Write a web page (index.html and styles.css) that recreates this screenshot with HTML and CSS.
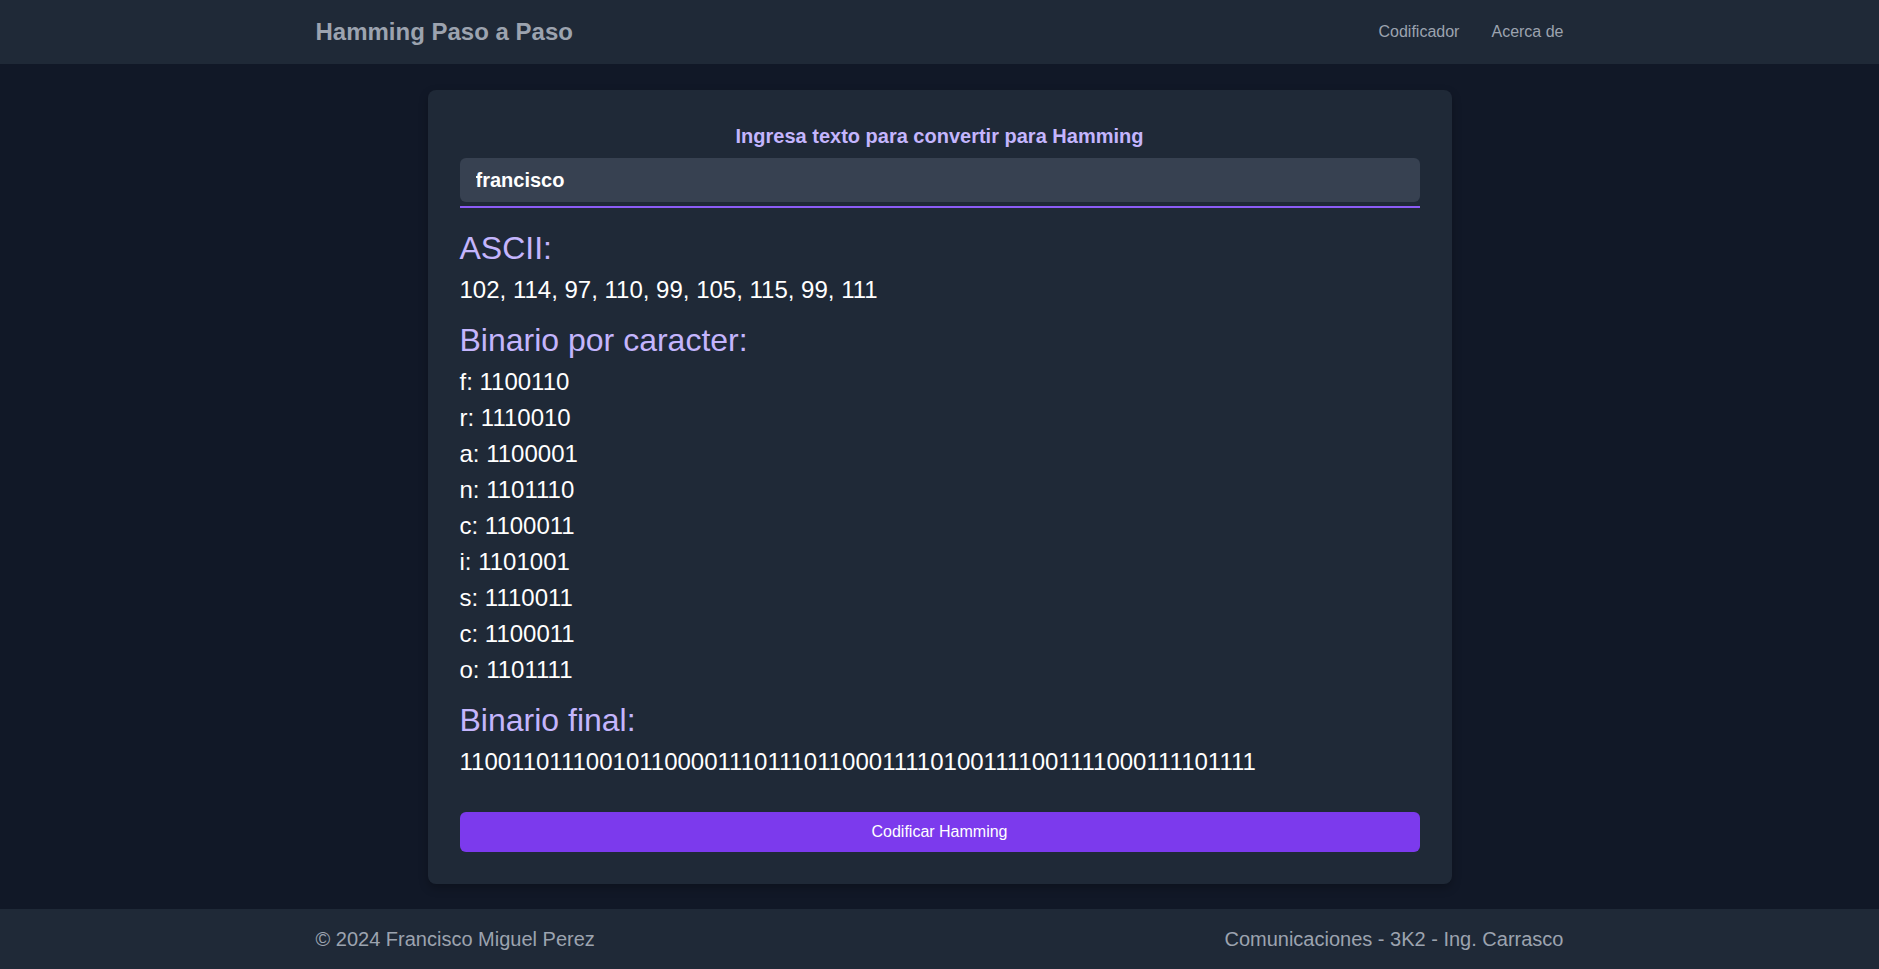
FILE: index.html
```html
<!DOCTYPE html>
<html lang="es">
<head>
<meta charset="utf-8">
<title>Hamming Paso a Paso</title>
<link rel="stylesheet" href="styles.css">
</head>
<body>
<div class="page">
  <header class="topbar">
    <div class="container topbar-inner">
      <a class="brand" href="#">Hamming Paso a Paso</a>
      <nav class="nav">
        <a href="#">Codificador</a>
        <a href="#">Acerca de</a>
      </nav>
    </div>
  </header>

  <main class="main">
    <section class="card">
      <label class="label" for="texto">Ingresa texto para convertir para Hamming</label>
      <div class="input-wrap">
        <input id="texto" class="text-input" type="text" value="francisco">
      </div>

      <div class="block first">
        <h2 class="heading">ASCII:</h2>
        <p class="value">102, 114, 97, 110, 99, 105, 115, 99, 111</p>
      </div>

      <div class="block">
        <h2 class="heading">Binario por caracter:</h2>
        <ul class="chars">
          <li>f: 1100110</li>
          <li>r: 1110010</li>
          <li>a: 1100001</li>
          <li>n: 1101110</li>
          <li>c: 1100011</li>
          <li>i: 1101001</li>
          <li>s: 1110011</li>
          <li>c: 1100011</li>
          <li>o: 1101111</li>
        </ul>
      </div>

      <div class="block">
        <h2 class="heading">Binario final:</h2>
        <p class="value">110011011100101100001110111011000111101001111001111000111101111</p>
      </div>

      <button class="btn" type="button">Codificar Hamming</button>
    </section>
  </main>

  <footer class="footer">
    <div class="container footer-inner">
      <span>© 2024 Francisco Miguel Perez</span>
      <span>Comunicaciones - 3K2 - Ing. Carrasco</span>
    </div>
  </footer>
</div>
</body>
</html>
```

FILE: styles.css
```css
* {
  box-sizing: border-box;
}

html, body {
  margin: 0;
  padding: 0;
}

body {
  background: #111827;
  color: #ffffff;
  font-family: "Liberation Sans", Arial, Helvetica, sans-serif;
  line-height: 1.5;
}

.page {
  min-height: 100vh;
  display: flex;
  flex-direction: column;
}

.container {
  max-width: 1280px;
  margin: 0 auto;
  padding: 0 16px;
  width: 100%;
}

.topbar {
  background: #1f2937;
}

.topbar-inner {
  display: flex;
  align-items: center;
  justify-content: space-between;
  height: 64px;
}

.brand {
  color: #9ca3af;
  font-size: 24px;
  font-weight: 700;
  line-height: 32px;
  text-decoration: none;
}

.nav {
  display: flex;
  gap: 32px;
}

.nav a {
  color: #9ca3af;
  font-size: 16px;
  line-height: 24px;
  text-decoration: none;
}

.main {
  flex: 1;
  display: flex;
  align-items: center;
  justify-content: center;
  padding: 24px 0;
}

.card {
  width: 1024px;
  background: #1f2937;
  border-radius: 8px;
  padding: 32px;
  box-shadow: 0 4px 10px rgba(0, 0, 0, 0.25);
}

.label {
  display: block;
  text-align: center;
  color: #c4b5fd;
  font-size: 20px;
  font-weight: 700;
  line-height: 28px;
  margin-bottom: 8px;
}

.input-wrap {
  padding-bottom: 4px;
  border-bottom: 2px solid #8b5cf6;
}

.text-input {
  display: block;
  width: 100%;
  height: 44px;
  background: #374151;
  border: none;
  border-radius: 6px;
  padding: 9px 16px 7px;
  color: #ffffff;
  font-family: "Liberation Sans", Arial, Helvetica, sans-serif;
  font-size: 20px;
  font-weight: 700;
  line-height: 28px;
  outline: none;
}

.block {
  margin-top: 8px;
}

.block.first {
  margin-top: 16px;
}

.heading {
  margin: 0;
  color: #c4b5fd;
  font-size: 32px;
  font-weight: 400;
  line-height: 48px;
}

.value {
  margin: 0;
  font-size: 24px;
  line-height: 36px;
  color: #ffffff;
}

.chars {
  list-style: none;
  margin: 0;
  padding: 0;
}

.chars li {
  font-size: 24px;
  line-height: 36px;
  color: #ffffff;
}

.btn {
  display: block;
  width: 100%;
  height: 40px;
  margin-top: 32px;
  background: #7c3aed;
  color: #ffffff;
  border: none;
  border-radius: 6px;
  font-family: "Liberation Sans", Arial, Helvetica, sans-serif;
  font-size: 16px;
  line-height: 24px;
  cursor: pointer;
}

.footer {
  background: #1f2937;
  padding: 16px 0;
}

.footer-inner {
  display: flex;
  justify-content: space-between;
  align-items: center;
  color: #9ca3af;
  font-size: 20px;
  line-height: 28px;
}
```
